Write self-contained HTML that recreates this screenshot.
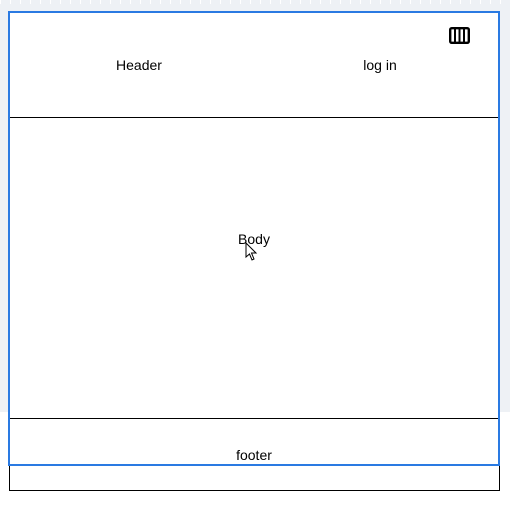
<!DOCTYPE html>
<html><head><meta charset="utf-8"><style>
html,body{margin:0;padding:0;width:510px;height:507px;overflow:hidden;background:#fff;font-family:"Liberation Sans",Arial,sans-serif;font-size:14px;color:#000}
.bg{position:absolute;left:0;top:0;width:510px;height:412px;background:#eef1f5;background-image:linear-gradient(90deg,#fff 1px,transparent 1px);background-size:10px 4px;background-repeat:repeat-x}
.abs{position:absolute}
.t{position:absolute;transform:translate(-50%,-50%);white-space:nowrap}
</style></head><body>
<div class="bg"></div>
<div class="abs" style="left:9px;top:12px;width:489px;height:478px;background:#fff;border:1px solid #000;border-top:none"></div>
<div class="abs" style="left:9px;top:117px;width:490px;height:1px;background:#000"></div>
<div class="abs" style="left:9px;top:418px;width:490px;height:1px;background:#000"></div>
<div class="abs" style="left:8px;top:11px;width:488px;height:451px;border:2px solid #2a7ae2"></div>
<div class="t" style="left:139px;top:65px">Header</div>
<div class="t" style="left:380px;top:65px">log in</div>
<div class="t" style="left:254px;top:239px">Body</div>
<div class="t" style="left:254px;top:455px">footer</div>
<svg class="abs" style="left:449px;top:27px" width="21" height="17" viewBox="0 0 21 17">
<rect x="1.2" y="1.2" width="18.6" height="14.6" rx="1.5" fill="none" stroke="#000" stroke-width="2.4"/>
<line x1="6" y1="2" x2="6" y2="15" stroke="#000" stroke-width="2"/>
<line x1="10.5" y1="2" x2="10.5" y2="15" stroke="#000" stroke-width="2"/>
<line x1="15" y1="2" x2="15" y2="15" stroke="#000" stroke-width="2"/>
</svg>
<svg class="abs" style="left:245px;top:242px" width="14" height="20" viewBox="0 0 14 20">
<path d="M1 1 L1 15 L4.5 12 L7 18 L9 17 L6.5 11 L11 11 Z" fill="#fff" stroke="#000" stroke-width="1"/>
</svg>
</body></html>
